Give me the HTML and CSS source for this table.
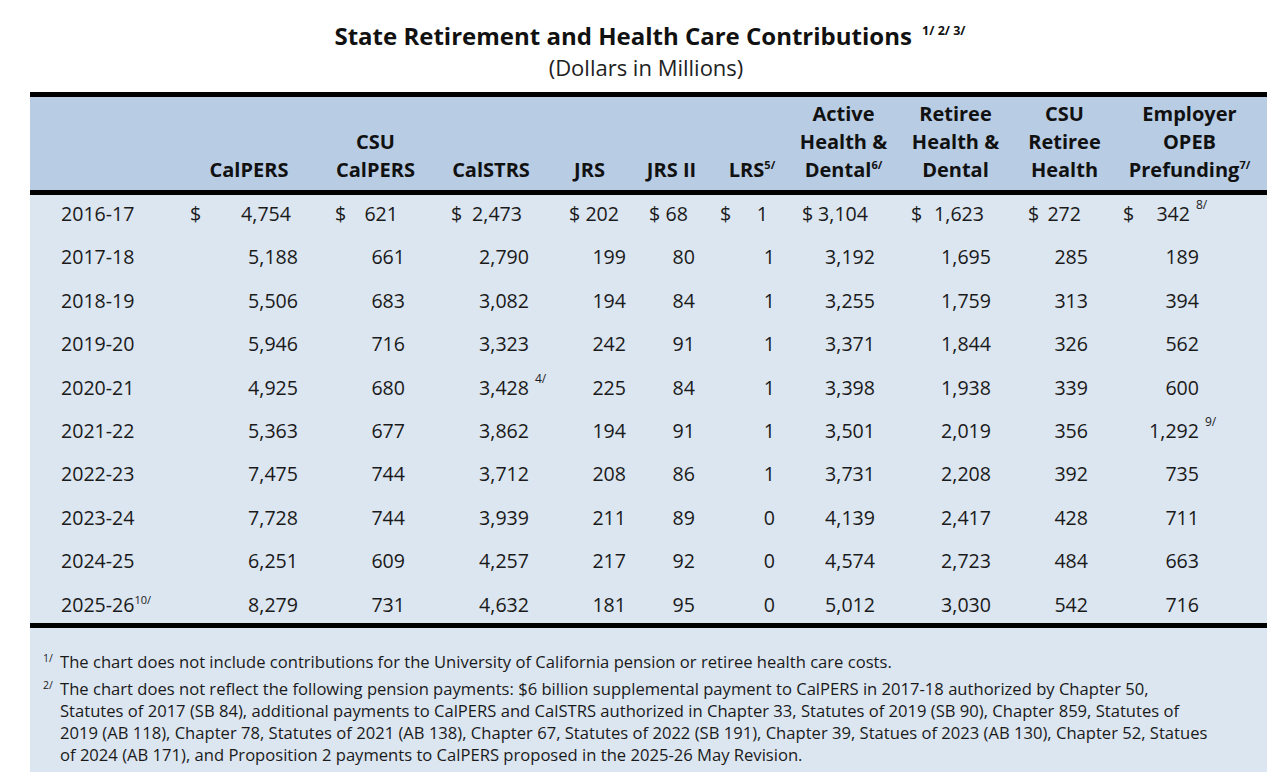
FILE: index.html
```html
<!DOCTYPE html>
<html>
<head>
<meta charset="utf-8">
<link rel="stylesheet" href="styles.css">
</head>
<body>
<h1 class="title">State Retirement and Health Care Contributions <sup class="title-fn">1/ 2/ 3/</sup></h1>
<p class="subtitle">(Dollars in Millions)</p>
<div class="panel">
  <table class="grid">
    <colgroup>
      <col style="width:154px"><col style="width:130px"><col style="width:123px"><col style="width:108px"><col style="width:89px"><col style="width:75px"><col style="width:86px"><col style="width:105px"><col style="width:111px"><col style="width:107px"><col style="width:149px">
    </colgroup>
    <thead>
      <tr>
        <th></th>
        <th class="h1">CalPERS</th>
        <th class="h2">CSU<br>CalPERS</th>
        <th class="h3">CalSTRS</th>
        <th class="h4">JRS</th>
        <th class="h5">JRS II</th>
        <th class="h6">LRS<sup>5/</sup></th>
        <th class="h7">Active<br>Health &amp;<br>Dental<sup>6/</sup></th>
        <th class="h8">Retiree<br>Health &amp;<br>Dental</th>
        <th class="h9">CSU<br>Retiree<br>Health</th>
        <th class="h10">Employer<br>OPEB<br>Prefunding<sup>7/</sup></th>
      </tr>
    </thead>
    <tbody>
      <tr class="first">
        <td class="yr">2016-17</td>
        <td class="c1"><div class="v"><span>$</span><span>4,754</span></div></td>
        <td class="c2"><div class="v"><span>$</span><span>621</span></div></td>
        <td class="c3"><div class="v"><span>$</span><span>2,473</span></div></td>
        <td class="c4"><div class="v"><span>$</span><span>202</span></div></td>
        <td class="c5"><div class="v"><span>$</span><span>68</span></div></td>
        <td class="c6"><div class="v"><span>$</span><span>1</span></div></td>
        <td class="c7"><div class="v"><span>$</span><span>3,104</span></div></td>
        <td class="c8"><div class="v"><span>$</span><span>1,623</span></div></td>
        <td class="c9"><div class="v"><span>$</span><span>272</span></div></td>
        <td class="c10"><div class="v"><span>$</span><span>342<span class="fn">8/</span></span></div></td>
      </tr>
      <tr>
        <td class="yr">2017-18</td>
        <td class="c1">5,188</td><td class="c2">661</td><td class="c3">2,790</td><td class="c4">199</td><td class="c5">80</td><td class="c6">1</td><td class="c7">3,192</td><td class="c8">1,695</td><td class="c9">285</td><td class="c10">189</td>
      </tr>
      <tr>
        <td class="yr">2018-19</td>
        <td class="c1">5,506</td><td class="c2">683</td><td class="c3">3,082</td><td class="c4">194</td><td class="c5">84</td><td class="c6">1</td><td class="c7">3,255</td><td class="c8">1,759</td><td class="c9">313</td><td class="c10">394</td>
      </tr>
      <tr>
        <td class="yr">2019-20</td>
        <td class="c1">5,946</td><td class="c2">716</td><td class="c3">3,323</td><td class="c4">242</td><td class="c5">91</td><td class="c6">1</td><td class="c7">3,371</td><td class="c8">1,844</td><td class="c9">326</td><td class="c10">562</td>
      </tr>
      <tr>
        <td class="yr">2020-21</td>
        <td class="c1">4,925</td><td class="c2">680</td><td class="c3">3,428<span class="fn">4/</span></td><td class="c4">225</td><td class="c5">84</td><td class="c6">1</td><td class="c7">3,398</td><td class="c8">1,938</td><td class="c9">339</td><td class="c10">600</td>
      </tr>
      <tr>
        <td class="yr">2021-22</td>
        <td class="c1">5,363</td><td class="c2">677</td><td class="c3">3,862</td><td class="c4">194</td><td class="c5">91</td><td class="c6">1</td><td class="c7">3,501</td><td class="c8">2,019</td><td class="c9">356</td><td class="c10">1,292<span class="fn">9/</span></td>
      </tr>
      <tr>
        <td class="yr">2022-23</td>
        <td class="c1">7,475</td><td class="c2">744</td><td class="c3">3,712</td><td class="c4">208</td><td class="c5">86</td><td class="c6">1</td><td class="c7">3,731</td><td class="c8">2,208</td><td class="c9">392</td><td class="c10">735</td>
      </tr>
      <tr>
        <td class="yr">2023-24</td>
        <td class="c1">7,728</td><td class="c2">744</td><td class="c3">3,939</td><td class="c4">211</td><td class="c5">89</td><td class="c6">0</td><td class="c7">4,139</td><td class="c8">2,417</td><td class="c9">428</td><td class="c10">711</td>
      </tr>
      <tr>
        <td class="yr">2024-25</td>
        <td class="c1">6,251</td><td class="c2">609</td><td class="c3">4,257</td><td class="c4">217</td><td class="c5">92</td><td class="c6">0</td><td class="c7">4,574</td><td class="c8">2,723</td><td class="c9">484</td><td class="c10">663</td>
      </tr>
      <tr class="last">
        <td class="yr">2025-26<sup>10/</sup></td>
        <td class="c1">8,279</td><td class="c2">731</td><td class="c3">4,632</td><td class="c4">181</td><td class="c5">95</td><td class="c6">0</td><td class="c7">5,012</td><td class="c8">3,030</td><td class="c9">542</td><td class="c10">716</td>
      </tr>
    </tbody>
  </table>
  <div class="notes">
    <div class="note"><span class="mark">1/</span><p>The chart does not include contributions for the University of California pension or retiree health care costs.</p></div>
    <div class="note"><span class="mark">2/</span><p>The chart does not reflect the following pension payments: $6 billion supplemental payment to CalPERS in 2017-18 authorized by Chapter 50,<br>Statutes of 2017 (SB 84), additional payments to CalPERS and CalSTRS authorized in Chapter 33, Statutes of 2019 (SB 90), Chapter 859, Statutes of<br>2019 (AB 118), Chapter 78, Statutes of 2021 (AB 138), Chapter 67, Statutes of 2022 (SB 191), Chapter 39, Statues of 2023 (AB 130), Chapter 52, Statues<br>of 2024 (AB 171), and Proposition 2 payments to CalPERS proposed in the 2025-26 May Revision.</p></div>
  </div>
</div>
</body>
</html>
```

FILE: styles.css
```css
html, body {
  margin: 0;
  padding: 0;
  background: #ffffff;
}
body {
  font-family: "Open Sans", "DejaVu Sans", sans-serif;
  color: #1a1a1a;
  width: 1286px;
  height: 772px;
  overflow: hidden;
}
.title {
  margin: 0;
  padding-top: 20px;
  text-align: center;
  font-size: 24px;
  line-height: 32px;
  font-weight: 700;
  color: #111;
  position: relative;
  left: 7px;
}
.title-fn {
  font-size: 12.5px;
  line-height: 0;
  vertical-align: 0;
  position: relative;
  top: -10px;
  margin-left: 4px;
}
.subtitle {
  margin: 0;
  text-align: center;
  font-size: 22px;
  line-height: 30px;
  color: #222;
  position: relative;
  left: 3px;
}
.panel {
  margin: 10px 0 0 30px;
  width: 1237px;
  background: #dce6f1;
  height: 700px;
}
.grid {
  border-collapse: collapse;
  table-layout: fixed;
  width: 1237px;
}
.grid thead th {
  background: #b8cce4;
  border-top: 5px solid #000;
  border-bottom: 5px solid #000;
  font-size: 20px;
  line-height: 28px;
  font-weight: 700;
  vertical-align: bottom;
  text-align: center;
  padding: 3px 0 6px;
  white-space: nowrap;
  color: #111;
}
.grid sup {
  font-size: 11px;
  line-height: 0;
  vertical-align: 0;
  position: relative;
  top: -8px;
}
.grid tbody td {
  padding: 6px 0 11.4px;
  line-height: 26px;
  vertical-align: top;
  font-size: 19.6px;
  text-align: right;
  white-space: nowrap;
  color: #1a1a1a;
}
.grid tbody tr.last td {
  padding-bottom: 5.4px;
  border-bottom: 5px solid #000;
}
.grid tbody td.yr {
  text-align: left;
  padding-left: 31px;
}
.v {
  display: flex;
  justify-content: space-between;
}
.fn {
  display: inline-block;
  width: 0;
  font-size: 12px;
  line-height: 12px;
  vertical-align: top;
  position: relative;
  top: -2px;
  text-indent: 6px;
  text-align: left;
}

.c1 { padding-right: 16px !important; }
.c2 { padding-right: 32px !important; }
.c3 { padding-right: 16px !important; }
.c4 { padding-right: 8px !important; }
.c5 { padding-right: 14px !important; }
.c6 { padding-right: 20px !important; }
.c7 { padding-right: 25px !important; }
.c8 { padding-right: 20px !important; }
.c9 { padding-right: 30px !important; }
.c10 { padding-right: 68px !important; }

.first .c1 { padding-left: 6px; padding-right: 23px !important; }
.first .c2 { padding-left: 21px; padding-right: 39px !important; }
.first .c3 { padding-left: 14px; padding-right: 23px !important; }
.first .c4 { padding-left: 24px; padding-right: 15px !important; }
.first .c5 { padding-left: 15px; padding-right: 21px !important; }
.first .c6 { padding-left: 11px; padding-right: 27px !important; }
.first .c7 { padding-left: 7px; padding-right: 32px !important; }
.first .c8 { padding-left: 11px; padding-right: 27px !important; }
.first .c9 { padding-left: 17px; padding-right: 37px !important; }
.first .c10 { padding-left: 5px; padding-right: 77px !important; }

.h7 { padding-right: 8px !important; }
.h10 { padding-right: 6px !important; }

.notes {
  padding: 23px 4px 0 13px;
  font-size: 16.6px;
  line-height: 22px;
  color: #1a1a1a;
}
.note {
  display: flex;
  margin-bottom: 5px;
}
.mark {
  width: 17px;
  flex: none;
  font-size: 10.5px;
  line-height: 14px;
}
.note p {
  margin: 0;
  white-space: nowrap;
}
```
